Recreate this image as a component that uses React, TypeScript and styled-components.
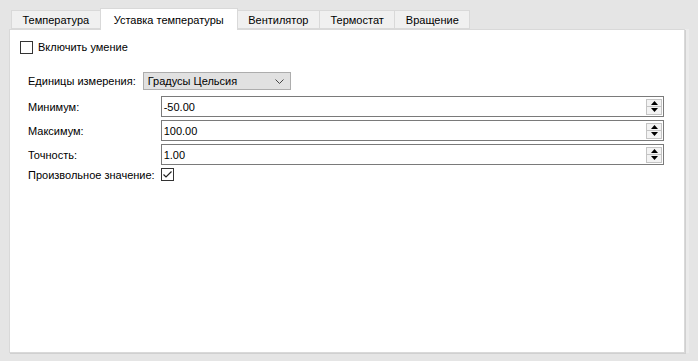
import React from "react";
import styled, { createGlobalStyle } from "styled-components";

const Global = createGlobalStyle`
  html, body { margin: 0; padding: 0; background: #e5e5e5; }
  body { font-family: "Liberation Sans", "Noto Sans", sans-serif; font-size: 11px; color: #000; }
`;

const Page = styled.div`
  width: 698px;
  height: 361px;
  box-sizing: border-box;
  padding: 8px 13px 8px 9px;
  display: flex;
  flex-direction: column;
`;

const TabBar = styled.div`
  display: flex;
  align-items: flex-end;
  padding-left: 2px;
  height: 21px;
  position: relative;
  z-index: 1;
`;

const Tab = styled.div<{ $active?: boolean }>`
  box-sizing: border-box;
  height: ${(p) => (p.$active ? "22px" : "19px")};
  margin-bottom: ${(p) => (p.$active ? "-1px" : "0")};
  margin-left: -1px;
  padding: 0 ${(p) => (p.$active ? "13px" : "10.5px")};
  border: 1px solid #d9d9d9;
  border-bottom: ${(p) => (p.$active ? "none" : "1px solid #d9d9d9")};
  background: ${(p) => (p.$active ? "#ffffff" : "#f0f0f0")};
  display: flex;
  align-items: center;
  padding-top: ${(p) => (p.$active ? "0" : "1px")};
  white-space: nowrap;
  &:first-child { margin-left: 0; }
`;

const Panel = styled.div`
  flex: 1;
  background: #fff;
  border: 1px solid #d9d9d9;
  box-shadow: 1px 1px 0 #d0d0d0, 4px 0 0 #ebebeb;
  padding: 10px 10px;
  display: flex;
  flex-direction: column;
`;

const CheckRow = styled.label`
  display: flex;
  align-items: center;
  gap: 5px;
  height: 14px;
`;

const Box = styled.span<{ $checked?: boolean }>`
  box-sizing: border-box;
  width: 13px;
  height: 13px;
  border: 1px solid #333;
  background: #fff;
  display: inline-flex;
  align-items: center;
  justify-content: center;
`;

const Form = styled.div`
  margin-top: 18px;
  padding-left: 8px;
  display: flex;
  flex-direction: column;
`;

const UnitRow = styled.div`
  display: flex;
  align-items: center;
  gap: 7px;
  height: 18px;
`;

const Combo = styled.div`
  box-sizing: border-box;
  width: 148px;
  height: 18px;
  border: 1px solid #adadad;
  background: #e1e1e1;
  display: flex;
  align-items: center;
  justify-content: space-between;
  padding: 0 6px 0 4px;
`;

const Grid = styled.div`
  margin-top: 6px;
  display: grid;
  grid-template-columns: auto 1fr;
  column-gap: 6px;
  row-gap: 3px;
  align-items: center;
  padding-right: 10px;
`;

const Spin = styled.div`
  box-sizing: border-box;
  height: 21px;
  border: 1px solid #7a7a7a;
  display: flex;
  align-items: center;
  padding-left: 2px;
  padding-right: 1px;
`;

const SpinText = styled.span`
  flex: 1;
`;

const SpinButtons = styled.div`
  display: flex;
  flex-direction: column;
  width: 16px;
  height: 16px;
`;

const SpinBtn = styled.div`
  flex: 1;
  box-sizing: border-box;
  border: 1px solid #c4c4c4;
  background: #f3f3f3;
  display: flex;
  align-items: center;
  justify-content: center;
  & + & { border-top: none; }
`;

const Arrow = ({ up }: { up?: boolean }) => (
  <svg width="7" height="4" viewBox="0 0 7 4">
    <polygon points={up ? "0,4 7,4 3.5,0" : "0,0 7,0 3.5,4"} fill="#000" />
  </svg>
);

const SpinBox = ({ value }: { value: string }) => (
  <Spin>
    <SpinText>{value}</SpinText>
    <SpinButtons>
      <SpinBtn><Arrow up /></SpinBtn>
      <SpinBtn><Arrow /></SpinBtn>
    </SpinButtons>
  </Spin>
);

const Check = () => (
  <svg width="11" height="11" viewBox="0 0 11 11">
    <path d="M1.5 5.5 L4 8 L9.5 2.5" stroke="#222" strokeWidth="1.2" fill="none" />
  </svg>
);

const Chevron = () => (
  <svg width="9" height="5" viewBox="0 0 9 5">
    <path d="M0.5 0.5 L4.5 4.5 L8.5 0.5" stroke="#444" strokeWidth="1" fill="none" />
  </svg>
);

export default function App() {
  return (
    <>
      <Global />
      <Page>
        <TabBar>
          <Tab>Температура</Tab>
          <Tab $active>Уставка температуры</Tab>
          <Tab>Вентилятор</Tab>
          <Tab>Термостат</Tab>
          <Tab>Вращение</Tab>
        </TabBar>
        <Panel>
          <CheckRow>
            <Box />
            Включить умение
          </CheckRow>
          <Form>
            <UnitRow>
              <span>Единицы измерения:</span>
              <Combo>
                <span>Градусы Цельсия</span>
                <Chevron />
              </Combo>
            </UnitRow>
            <Grid>
              <span>Минимум:</span>
              <SpinBox value="-50.00" />
              <span>Максимум:</span>
              <SpinBox value="100.00" />
              <span>Точность:</span>
              <SpinBox value="1.00" />
              <span>Произвольное значение:</span>
              <div>
                <Box $checked>
                  <Check />
                </Box>
              </div>
            </Grid>
          </Form>
        </Panel>
      </Page>
    </>
  );
}
